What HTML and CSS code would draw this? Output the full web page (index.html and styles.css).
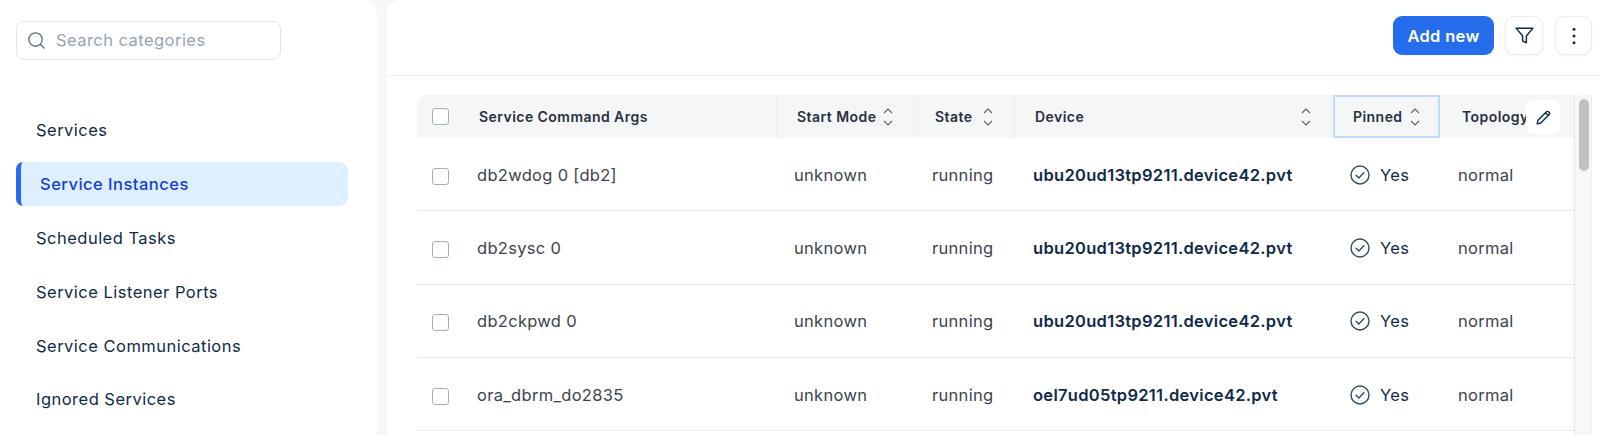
FILE: index.html
```html
<!DOCTYPE html>
<html lang="en">
<head>
<meta charset="utf-8">
<title>Service Instances</title>
<link rel="stylesheet" href="styles.css">
</head>
<body>
<div class="app">
  <aside class="sidebar">
    <div class="search">
      <svg class="search-icon" viewBox="0 0 20 20" fill="none"><circle cx="9" cy="9" r="7"/><path d="M14.2 14.2 18 18"/></svg>
      <span>Search categories</span>
    </div>
    <nav class="nav">
      <a class="nav-item">Services</a>
      <a class="nav-item active">Service Instances</a>
      <a class="nav-item">Scheduled Tasks</a>
      <a class="nav-item">Service Listener Ports</a>
      <a class="nav-item">Service Communications</a>
      <a class="nav-item">Ignored Services</a>
    </nav>
  </aside>
  <main class="main">
    <header class="toolbar">
      <button class="btn-primary">Add new</button>
      <button class="btn-icon"><svg viewBox="0 0 20 20" fill="none" class="ico-filter"><path d="M2 3h16l-6.2 7.4V17l-3.6-1.8v-4.8z"/></svg></button>
      <button class="btn-icon"><svg viewBox="0 0 20 20" class="ico-kebab"><circle cx="10" cy="3.2" r="1.5"/><circle cx="10" cy="10" r="1.5"/><circle cx="10" cy="16.8" r="1.5"/></svg></button>
    </header>
    <section class="table-area">
      <div class="table-wrap">
        <table class="grid">
          <colgroup>
            <col class="c-check"><col class="c-args"><col class="c-mode"><col class="c-state"><col class="c-device"><col class="c-pinned"><col class="c-topo">
          </colgroup>
          <thead>
            <tr>
              <th class="first"><span class="box"></span></th>
              <th class="plain">Service Command Args</th>
              <th><div class="th-in">Start Mode <svg class="sort" viewBox="0 0 10 18"><path d="M1 5l4-4 4 4M1 13l4 4 4-4"/></svg></div></th>
              <th><div class="th-in">State <svg class="sort wide" viewBox="0 0 10 18"><path d="M1 5l4-4 4 4M1 13l4 4 4-4"/></svg></div></th>
              <th><div class="th-in spread">Device <svg class="sort" viewBox="0 0 10 18"><path d="M1 5l4-4 4 4M1 13l4 4 4-4"/></svg></div></th>
              <th class="focused"><div class="th-in">Pinned <svg class="sort" viewBox="0 0 10 18"><path d="M1 5l4-4 4 4M1 13l4 4 4-4"/></svg></div></th>
              <th class="plain">Topology</th>
            </tr>
          </thead>
          <tbody>
            <tr>
              <td class="first"><span class="box"></span></td><td>db2wdog 0 [db2]</td><td>unknown</td><td>running</td>
              <td class="device">ubu20ud13tp9211.device42.pvt</td>
              <td class="yes"><div class="yes-in"><svg viewBox="0 0 20 20" fill="none"><circle cx="10" cy="10" r="9"/><path d="M6.1 10.3l2.7 2.6 5-5.2"/></svg>Yes</div></td><td>normal</td>
            </tr>
            <tr>
              <td class="first"><span class="box"></span></td><td>db2sysc 0</td><td>unknown</td><td>running</td>
              <td class="device">ubu20ud13tp9211.device42.pvt</td>
              <td class="yes"><div class="yes-in"><svg viewBox="0 0 20 20" fill="none"><circle cx="10" cy="10" r="9"/><path d="M6.1 10.3l2.7 2.6 5-5.2"/></svg>Yes</div></td><td>normal</td>
            </tr>
            <tr>
              <td class="first"><span class="box"></span></td><td>db2ckpwd 0</td><td>unknown</td><td>running</td>
              <td class="device">ubu20ud13tp9211.device42.pvt</td>
              <td class="yes"><div class="yes-in"><svg viewBox="0 0 20 20" fill="none"><circle cx="10" cy="10" r="9"/><path d="M6.1 10.3l2.7 2.6 5-5.2"/></svg>Yes</div></td><td>normal</td>
            </tr>
            <tr>
              <td class="first"><span class="box"></span></td><td>ora_dbrm_do2835</td><td>unknown</td><td>running</td>
              <td class="device">oel7ud05tp9211.device42.pvt</td>
              <td class="yes"><div class="yes-in"><svg viewBox="0 0 20 20" fill="none"><circle cx="10" cy="10" r="9"/><path d="M6.1 10.3l2.7 2.6 5-5.2"/></svg>Yes</div></td><td>normal</td>
            </tr>
          </tbody>
        </table>
        <button class="edit-col"><svg viewBox="0 0 16 16" fill="none"><path d="M2 14l.8-3.4 8-8a1.4 1.4 0 0 1 2 0l.6.6a1.4 1.4 0 0 1 0 2l-8 8zM9.8 3.6l2.6 2.6"/></svg></button>
      </div>
      <div class="scrollbar"><div class="thumb"></div></div>
    </section>
  </main>
</div>
</body>
</html>
```

FILE: styles.css
```css
* { box-sizing: border-box; }
html, body { margin: 0; height: 435px; overflow: hidden; }
body { background: #f5f7fa; font-family: Inter, "Noto Sans", sans-serif; color: #0f2a4a; }
.app { display: flex; gap: 10px; height: 435px; }

.sidebar { width: 377px; background: #fff; border-top-right-radius: 14px; padding: 21px 16px 0; flex: none; }
.search { width: 265px; height: 39px; border: 1.5px solid #e1e7ef; border-radius: 8px; display: flex; align-items: center; padding: 0 0 1px 10px; gap: 10px; color: #94a3b8; font-size: 16.5px; letter-spacing: .45px; }
.search-icon { width: 19px; height: 19px; stroke: #64748b; stroke-width: 1.5; stroke-linecap: round; flex: none; }
.nav { margin-top: 48.4px; display: flex; flex-direction: column; gap: 9.8px; width: 332px; }
.nav-item { height: 44px; display: flex; align-items: center; padding-left: 20px; font-size: 16.5px; letter-spacing: .48px; color: #0f2a4a; border-radius: 9px; }
.nav-item.active { background: #deefff; color: #1440d8; font-weight: 500; border-left: 5px solid #266ded; border-radius: 7px 9px 9px 7px; padding-left: 19px; }

.main { flex: 1; min-width: 0; background: #fff; border-top-left-radius: 14px; display: flex; flex-direction: column; }
.toolbar { height: 76px; flex: none; border-bottom: 1.5px solid #eef0f3; display: flex; justify-content: flex-end; align-items: flex-start; padding: 16px 8px 0 0; gap: 11px; }
.btn-primary { width: 101px; height: 39px; background: #266ded; color: #fff; border: 0; border-radius: 9px; font: 600 16.5px Inter, sans-serif; letter-spacing: .3px; }
.btn-icon { width: 38px; height: 39px; background: #fff; border: 1.5px solid #e9edf3; border-radius: 9px; box-shadow: 0 1px 2px rgba(15, 42, 74, .05); display: flex; align-items: center; justify-content: center; padding: 0; }
.btn-icon:last-child { width: 37px; margin-left: 1px; }
.ico-filter { width: 21px; height: 21px; stroke: #0f2a4a; stroke-width: 1.4; stroke-linejoin: round; }
.ico-kebab { width: 20px; height: 20px; fill: #1e293b; }

.table-area { flex: 1; min-height: 0; display: flex; padding: 19px 8px 0 30px; }
.table-wrap { flex: 1; min-width: 0; position: relative; overflow: hidden; }
.grid { border-collapse: separate; border-spacing: 0; table-layout: fixed; width: 1157px; }
.c-check { width: 42px; } .c-args { width: 317px; } .c-mode { width: 138px; } .c-state { width: 100px; } .c-device { width: 319px; } .c-pinned { width: 107px; } .c-topo { width: 134px; }

th { height: 43px; background: #f5f6f8; font-size: 14px; font-weight: 600; letter-spacing: .45px; color: #27313f; text-align: left; padding: 0 0 0 20px; border-left: 1px solid #eceef1; white-space: nowrap; }
th.first { border-left: 0; border-top-left-radius: 10px; padding-left: 15px; }
th.plain:nth-child(2) { border-left: 0; }
th.plain:last-child { border-left: 0; padding-left: 22px; }
th.focused { border: 2px solid #bfdbfe; padding-left: 18px; }
.th-in { display: flex; align-items: center; gap: 7px; }
.th-in.spread { justify-content: space-between; padding-right: 22px; }
.sort { width: 10px; height: 18px; fill: none; stroke: #56606e; stroke-width: 1.1; flex: none; }
.sort.wide { margin-left: 3px; }

td { height: 73.3px; font-size: 16.5px; letter-spacing: .3px; color: #3b4450; padding: 1px 0 0 18px; border-bottom: 1.5px solid #e9ecf0; white-space: nowrap; vertical-align: middle; }
td.first { padding-left: 15px; }
td.first .box { margin-top: 3px; }
td.device { font-weight: 600; color: #0f2a4a; padding-left: 19px; }
td.yes { color: #0f2a4a; padding-left: 17px; }
.yes-in { display: flex; align-items: center; gap: 10px; }
.yes-in svg { width: 20px; height: 20px; stroke: #334b63; stroke-width: 1.4; stroke-linecap: round; stroke-linejoin: round; flex: none; }

.box { display: block; width: 17px; height: 17px; border: 1.5px solid #a3afbf; border-radius: 3px; background: #fff; }

.edit-col { position: absolute; top: 5px; right: 14px; width: 34px; height: 34px; background: #fff; border: 0; border-radius: 7px; display: flex; align-items: center; justify-content: center; padding: 0; }
.edit-col svg { width: 17px; height: 17px; stroke: #0f2a4a; stroke-width: 1.3; stroke-linejoin: round; }

.scrollbar { width: 18px; flex: none; background: #f8f8f8; border-left: 1px solid #e6e6e6; border-right: 1px solid #eee; padding: 4px 3px 0 4px; }
.thumb { width: 10px; height: 72px; border-radius: 5px; background: #c1c1c1; }
```
